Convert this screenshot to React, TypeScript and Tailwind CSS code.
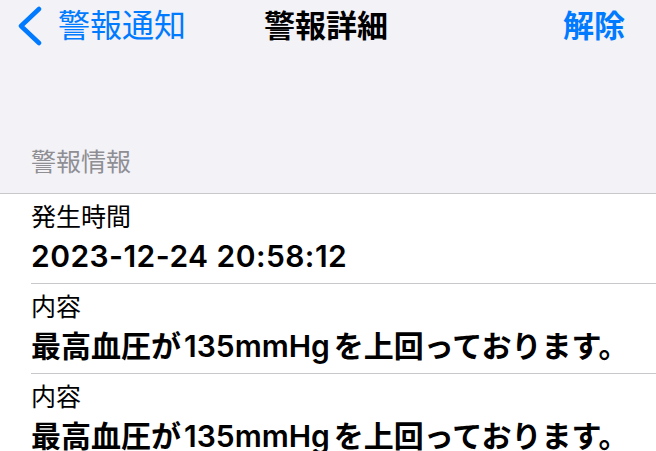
import React from "react";

const font = { fontFamily: 'Inter, "Noto Sans CJK JP", sans-serif' };

function Row({ label, children }: { label: string; children: React.ReactNode }) {
  return (
    <div className="pl-[31px]">
      <div className="border-b border-[#c8c7cc] pt-[8px] pb-[7px]">
        <div className="text-[25px] leading-[30px] text-black">{label}</div>
        <div className="mt-[4px] text-[30px] leading-[40px] font-semibold text-black whitespace-nowrap">{children}</div>
      </div>
    </div>
  );
}

function Content() {
  return (
    <>
      最高血圧が<span className="ml-[3px] mr-[4px]">135mmHg</span>を上回っております。
    </>
  );
}

export default function App() {
  return (
    <div className="w-[656px] h-[451px] overflow-hidden bg-white" style={font}>
      <div className="bg-[#f2f2f7]">
        <div className="relative h-[52px] flex items-center">
          <div className="flex items-center pl-[16px] gap-[15px]">
            <svg width="27" height="40" viewBox="0 0 27 40" className="shrink-0">
              <polyline points="23,3 5,20 23,37" fill="none" stroke="#007aff" strokeWidth="4.5" strokeLinecap="round" strokeLinejoin="round" />
            </svg>
            <span className="text-[32px] leading-[40px] text-[#007aff]">警報通知</span>
          </div>
          <div className="absolute left-[264px] top-0 h-[52px] flex items-center text-[31px] font-bold text-black">警報詳細</div>
          <div className="ml-auto pr-[31px] text-[31px] font-bold text-[#007aff]">解除</div>
        </div>
        <div className="h-[141px] flex items-end pl-[31px] pb-[16px]">
          <span className="text-[25px] leading-[30px] text-[#8e8e93]">警報情報</span>
        </div>
      </div>
      <div className="border-t border-[#c8c7cc] bg-white">
        <Row label="発生時間">
          <span className="tracking-[0.45px]">2023-12-24 20:58:12</span>
        </Row>
        <Row label="内容">
          <Content />
        </Row>
        <Row label="内容">
          <Content />
        </Row>
      </div>
    </div>
  );
}
